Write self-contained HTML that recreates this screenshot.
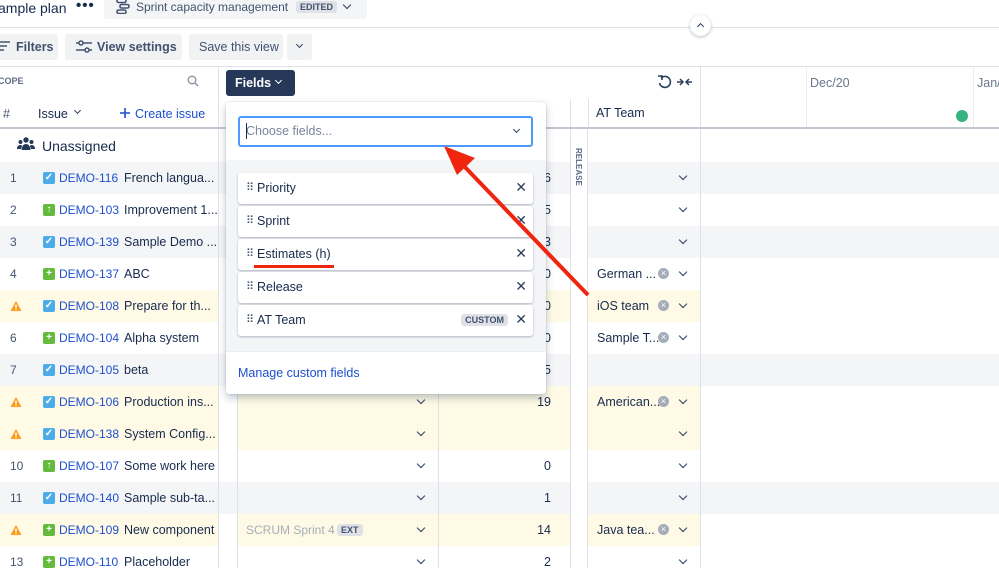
<!DOCTYPE html>
<html><head><meta charset="utf-8"><style>
*{box-sizing:border-box;margin:0;padding:0}
body{width:999px;height:568px;overflow:hidden;background:#fff;font-family:"Liberation Sans",Arial,sans-serif;color:#172b4d;font-size:12.5px;position:relative}
.a{position:absolute}
.row{position:absolute;left:0;width:999px;height:32px}
.num{position:absolute;left:10px;top:9px;color:#44546f;font-size:12px}
.ic{position:absolute;left:43px;top:10px;width:12px;height:12px;border-radius:2px;color:#fff;font-size:10px;line-height:12px;text-align:center;font-weight:bold}
.t{background:#4bade8}.g{background:#63ba3c}
.key{position:absolute;left:59px;top:9px;color:#1d4fd0;font-size:12px}
.tt{position:absolute;left:124px;top:9px;font-size:12.5px;white-space:nowrap}
.chev{position:absolute;width:6px;height:6px;border-right:1.6px solid #2c3e5d;border-bottom:1.6px solid #2c3e5d;transform:rotate(45deg)}
.est{position:absolute;right:448px;top:9px;font-size:12.5px}
.team{position:absolute;left:597px;top:9px;font-size:12.5px;white-space:nowrap}
.clr{position:absolute;left:658px;top:10px;width:11px;height:11px;border-radius:50%;background:#a5adba;color:#fff;font-size:9px;line-height:11px;text-align:center}
.w{position:absolute;left:10px;top:10px}
.item{position:absolute;left:238px;width:295px;height:31px;background:#fff;border-radius:3px;box-shadow:0 1px 2px rgba(9,30,66,.3)}
.item .d{position:absolute;left:8px;top:8px;font-size:11px;color:#44546f;letter-spacing:-1px}
.item .n{position:absolute;left:19px;top:8px;font-size:12.5px}
.item .x{position:absolute;right:6px;top:6px;font-size:14px;color:#2c3e5d}
</style></head><body>
<svg width="0" height="0" style="position:absolute"><defs><symbol id="warn" viewBox="0 0 12 12"><path d="M6 1 L11.5 11 H0.5Z" fill="#ff991f"/><rect x="5.3" y="4.5" width="1.4" height="3.5" fill="#fff"/><rect x="5.3" y="8.8" width="1.4" height="1.3" fill="#fff"/></symbol></defs></svg>
<!-- top bar -->
<div class="a" style="left:-2px;top:0;font-size:14px">ample plan</div>
<div class="a" style="left:76px;top:-3px;font-size:15px;font-weight:bold;letter-spacing:1px">•••</div>
<div class="a" style="left:104px;top:-4px;width:263px;height:23px;background:#f4f5f7;border-radius:3px"></div>
<svg class="a" style="left:115px;top:-2px" width="16" height="16" viewBox="0 0 16 16"><g fill="none" stroke="#44546f" stroke-width="1.6"><rect x="2" y="1" width="9" height="3.5" rx="1.5"/><rect x="5" y="6.5" width="9" height="3.5" rx="1.5"/><rect x="2" y="12" width="9" height="3.5" rx="1.5"/></g></svg>
<div class="a" style="left:136px;top:0;font-size:12px;color:#42526e">Sprint capacity management</div>
<div class="a" style="left:296px;top:1px;background:#dfe1e6;border-radius:3px;font-size:9px;font-weight:bold;color:#42526e;padding:1px 4px">EDITED</div>
<div class="chev" style="left:344px;top:2px"></div>
<div class="a" style="left:0;top:27px;width:999px;height:1px;background:#dfe1e6"></div>
<div class="a" style="left:690px;top:15px;width:21px;height:21px;border-radius:50%;background:#fff;box-shadow:0 1px 3px rgba(9,30,66,.3)"></div>
<div class="a" style="left:698px;top:24px;width:5px;height:5px;border-left:1.6px solid #2c3e5d;border-top:1.6px solid #2c3e5d;transform:rotate(45deg)"></div>
<!-- toolbar -->
<div class="a" style="left:-4px;top:34px;width:62px;height:26px;background:#f1f2f4;border-radius:3px"></div>
<svg class="a" style="left:0;top:40px" width="10" height="12" viewBox="0 0 10 12"><g stroke="#44546f" stroke-width="1.5"><line x1="0" y1="2" x2="10" y2="2"/><line x1="0" y1="6" x2="7" y2="6"/><line x1="0" y1="10" x2="4" y2="10"/></g></svg>
<div class="a" style="left:16px;top:40px;font-size:12.5px;color:#42526e;font-weight:bold">Filters</div>
<div class="a" style="left:65px;top:34px;width:117px;height:26px;background:#f1f2f4;border-radius:3px"></div>
<svg class="a" style="left:76px;top:40px" width="16" height="14" viewBox="0 0 16 14"><g stroke="#44546f" stroke-width="1.5" fill="#f1f2f4"><line x1="0" y1="3" x2="16" y2="3"/><line x1="0" y1="10" x2="16" y2="10"/><circle cx="5" cy="3" r="2"/><circle cx="11" cy="10" r="2"/></g></svg>
<div class="a" style="left:97px;top:40px;font-size:12.5px;color:#42526e;font-weight:bold">View settings</div>
<div class="a" style="left:189px;top:34px;width:94px;height:26px;background:#f1f2f4;border-radius:3px"></div>
<div class="a" style="left:199px;top:40px;font-size:12.5px;color:#42526e">Save this view</div>
<div class="a" style="left:287px;top:34px;width:25px;height:26px;background:#f1f2f4;border-radius:3px"></div>
<div class="chev" style="left:297px;top:42px;width:5px;height:5px"></div>
<div class="a" style="left:0;top:66px;width:999px;height:1px;background:#dfe1e6"></div>
<!-- header -->
<div class="a" style="left:-2px;top:76px;font-size:9px;font-weight:bold;color:#5e6c84">COPE</div>
<svg class="a" style="left:187px;top:75px" width="12" height="12" viewBox="0 0 12 12"><circle cx="5" cy="5" r="3.8" fill="none" stroke="#8993a4" stroke-width="1.4"/><line x1="8" y1="8" x2="11" y2="11" stroke="#8993a4" stroke-width="1.4"/></svg>
<div class="a" style="left:3px;top:107px;color:#44546f">#</div>
<div class="a" style="left:38px;top:107px">Issue</div>
<div class="chev" style="left:75px;top:108px;width:5px;height:5px"></div>
<svg class="a" style="left:119px;top:107px" width="12" height="12" viewBox="0 0 12 12"><path d="M6 1v10M1 6h10" stroke="#1d4fd0" stroke-width="1.6"/></svg>
<div class="a" style="left:135px;top:107px;color:#1d4fd0">Create issue</div>
<div class="a" style="left:218px;top:66px;width:1px;height:502px;background:#dfe1e6"></div>
<div class="a" style="left:226px;top:70px;width:69px;height:26px;background:#253858;border-radius:3px"></div>
<div class="a" style="left:235px;top:76px;color:#fff;font-weight:bold;font-size:12.5px">Fields</div>
<div class="a" style="left:276px;top:78px;width:5px;height:5px;border-right:1.5px solid #fff;border-bottom:1.5px solid #fff;transform:rotate(45deg)"></div>
<svg class="a" style="left:657px;top:74px" width="36" height="16" viewBox="0 0 36 16"><path d="M4 4 A5.5 5.5 0 1 1 2.5 9" fill="none" stroke="#2c3e5d" stroke-width="1.6"/><path d="M1 2 L5 2 L5 6" fill="none" stroke="#2c3e5d" stroke-width="1.6"/><path d="M20 8h5M23 5l3 3-3 3M35 8h-5M32 5l-3 3 3 3" fill="none" stroke="#2c3e5d" stroke-width="1.5"/></svg>
<div class="a" style="left:700px;top:66px;width:1px;height:502px;background:#dfe1e6"></div>
<div class="a" style="left:806px;top:66px;width:1px;height:62px;background:#ebecf0"></div>
<div class="a" style="left:973px;top:66px;width:1px;height:62px;background:#ebecf0"></div>
<div class="a" style="left:810px;top:76px;color:#6b778c">Dec/20</div>
<div class="a" style="left:977px;top:76px;color:#6b778c">Jan/</div>
<div class="a" style="left:956px;top:110px;width:12px;height:12px;border-radius:50%;background:#36b37e"></div>
<div class="a" style="left:588px;top:99px;width:1px;height:30px;background:#dfe1e6"></div>
<div class="a" style="left:570px;top:99px;width:1px;height:30px;background:#dfe1e6"></div>
<div class="a" style="left:596px;top:106px">AT Team</div>
<div class="a" style="left:0;top:127px;width:999px;height:2px;background:#c1c7d0"></div>
<!-- unassigned -->
<svg class="a" style="left:17px;top:137px" width="18" height="14" viewBox="0 0 18 14"><g fill="#253858"><circle cx="9" cy="3" r="2.7"/><circle cx="3.5" cy="5" r="2"/><circle cx="14.5" cy="5" r="2"/><path d="M4.5 13 Q5 7 9 7 Q13 7 13.5 13Z"/><path d="M0 12 Q0 8 3.5 8 Q5 8 5 9 L4 12Z"/><path d="M18 12 Q18 8 14.5 8 Q13 8 13 9 L14 12Z"/></g></svg>
<div class="a" style="left:42px;top:138px;font-size:14px">Unassigned</div>

<!-- rows -->
<div class="row" style="top:162px;background:#f4f5f7"><div class="num">1</div><div class="ic t">✓</div><div class="key">DEMO-116</div><div class="tt">French langua...</div><div class="est">6</div><div class="chev" style="left:680px;top:11px"></div></div>
<div class="row" style="top:194px"><div class="num">2</div><div class="ic g">↑</div><div class="key">DEMO-103</div><div class="tt">Improvement 1...</div><div class="est">5</div><div class="chev" style="left:680px;top:11px"></div></div>
<div class="row" style="top:226px;background:#f4f5f7"><div class="num">3</div><div class="ic t">✓</div><div class="key">DEMO-139</div><div class="tt">Sample Demo ...</div><div class="est">3</div><div class="chev" style="left:680px;top:11px"></div></div>
<div class="row" style="top:258px"><div class="num">4</div><div class="ic g">+</div><div class="key">DEMO-137</div><div class="tt">ABC</div><div class="est">0</div><div class="team">German ...</div><div class="clr">×</div><div class="chev" style="left:680px;top:11px"></div></div>
<div class="row" style="top:290px;background:linear-gradient(90deg,#fffae6 0 218px,#fff 218px 238px,#fffae6 238px 700px,#fff 700px)"><svg class="w" width="12" height="12"><use href="#warn"/></svg><div class="ic t">✓</div><div class="key">DEMO-108</div><div class="tt">Prepare for th...</div><div class="est">0</div><div class="team">iOS team</div><div class="clr">×</div><div class="chev" style="left:680px;top:11px"></div></div>
<div class="row" style="top:322px"><div class="num">6</div><div class="ic g">+</div><div class="key">DEMO-104</div><div class="tt">Alpha system</div><div class="est">0</div><div class="team">Sample T...</div><div class="clr">×</div><div class="chev" style="left:680px;top:11px"></div></div>
<div class="row" style="top:354px;background:#f4f5f7"><div class="num">7</div><div class="ic t">✓</div><div class="key">DEMO-105</div><div class="tt">beta</div><div class="est">5</div></div>
<div class="row" style="top:386px;background:linear-gradient(90deg,#fffae6 0 218px,#fff 218px 238px,#fffae6 238px 700px,#fff 700px)"><svg class="w" width="12" height="12"><use href="#warn"/></svg><div class="ic t">✓</div><div class="key">DEMO-106</div><div class="tt">Production ins...</div><div class="chev" style="left:418px;top:11px"></div><div class="est">19</div><div class="team">American...</div><div class="clr">×</div><div class="chev" style="left:680px;top:11px"></div></div>
<div class="row" style="top:418px;background:linear-gradient(90deg,#fffae6 0 218px,#fff 218px 238px,#fffae6 238px 700px,#fff 700px)"><svg class="w" width="12" height="12"><use href="#warn"/></svg><div class="ic t">✓</div><div class="key">DEMO-138</div><div class="tt">System Config...</div><div class="chev" style="left:418px;top:11px"></div><div class="chev" style="left:680px;top:11px"></div></div>
<div class="row" style="top:450px"><div class="num">10</div><div class="ic g">↑</div><div class="key">DEMO-107</div><div class="tt">Some work here</div><div class="chev" style="left:418px;top:11px"></div><div class="est">0</div><div class="chev" style="left:680px;top:11px"></div></div>
<div class="row" style="top:482px;background:#f4f5f7"><div class="num">11</div><div class="ic t">✓</div><div class="key">DEMO-140</div><div class="tt">Sample sub-ta...</div><div class="chev" style="left:418px;top:11px"></div><div class="est">1</div><div class="chev" style="left:680px;top:11px"></div></div>
<div class="row" style="top:514px;background:linear-gradient(90deg,#fffae6 0 218px,#fff 218px 238px,#fffae6 238px 700px,#fff 700px)"><svg class="w" width="12" height="12"><use href="#warn"/></svg><div class="ic g">+</div><div class="key">DEMO-109</div><div class="tt">New component</div><div class="a" style="left:246px;top:9px;color:#a5adba;font-size:12px">SCRUM Sprint 4</div><div class="a" style="left:337px;top:10px;background:#dfe1e6;border-radius:3px;font-size:9px;font-weight:bold;color:#42526e;padding:1px 4px">EXT</div><div class="chev" style="left:418px;top:11px"></div><div class="est">14</div><div class="team">Java tea...</div><div class="clr">×</div><div class="chev" style="left:680px;top:11px"></div></div>
<div class="row" style="top:546px"><div class="num">13</div><div class="ic g">+</div><div class="key">DEMO-110</div><div class="tt">Placeholder</div><div class="chev" style="left:418px;top:11px"></div><div class="est">2</div><div class="chev" style="left:680px;top:11px"></div></div>

<!-- column lines -->
<div class="a" style="left:218px;top:129px;width:1px;height:439px;background:#dfe1e6"></div>
<div class="a" style="left:237px;top:129px;width:1px;height:439px;background:#dfe1e6"></div>
<div class="a" style="left:438px;top:129px;width:1px;height:439px;background:#dfe1e6"></div>
<div class="a" style="left:570px;top:129px;width:18px;height:439px;background:#fff;border-left:1px solid #dfe1e6;border-right:1px solid #dfe1e6"></div>
<div class="a" style="left:574px;top:148px;font-size:8px;font-weight:bold;color:#5e6c84;writing-mode:vertical-rl">RELEASE</div>
<div class="a" style="left:700px;top:129px;width:1px;height:439px;background:#dfe1e6"></div>

<!-- popup -->
<div class="a" style="left:226px;top:102px;width:320px;height:292px;background:#fff;border-radius:3px;box-shadow:0 4px 8px rgba(9,30,66,.25),0 0 1px rgba(9,30,66,.3)"></div>
<div class="a" style="left:226px;top:160px;width:320px;height:191px;background:#f4f5f7"></div>
<div class="a" style="left:226px;top:351px;width:320px;height:1px;background:#ebecf0"></div>
<div class="a" style="left:238px;top:116px;width:295px;height:31px;border:2px solid #4c9aff;border-radius:3px;background:#fff"></div>
<div class="a" style="left:246px;top:124px;color:#7a869a">Choose fields...</div>
<div class="a" style="left:246px;top:123px;width:1px;height:16px;background:#172b4d"></div>
<div class="chev" style="left:514px;top:127px;width:5px;height:5px"></div>
<div class="item" style="top:173px"><span class="d">⠿</span><span class="n">Priority</span><span class="x">✕</span></div>
<div class="item" style="top:206px"><span class="d">⠿</span><span class="n">Sprint</span><span class="x">✕</span></div>
<div class="item" style="top:239px"><span class="d">⠿</span><span class="n">Estimates (h)</span><span class="x">✕</span></div>
<div class="item" style="top:272px"><span class="d">⠿</span><span class="n">Release</span><span class="x">✕</span></div>
<div class="item" style="top:305px"><span class="d">⠿</span><span class="n">AT Team</span><span class="a" style="right:25px;top:9px;background:#dfe1e6;border-radius:3px;font-size:9px;font-weight:bold;color:#42526e;padding:1px 4px">CUSTOM</span><span class="x">✕</span></div>
<div class="a" style="left:238px;top:366px;color:#1d4fd0">Manage custom fields</div>
<div class="a" style="left:254px;top:265px;width:80px;height:3px;background:#f0250f"></div>

<!-- arrow -->
<svg class="a" style="left:0;top:0" width="999" height="568"><line x1="588" y1="295" x2="462" y2="164" stroke="#f0250f" stroke-width="4"/><polygon points="444,146 475,158 457,175" fill="#f0250f"/></svg>
</body></html>
